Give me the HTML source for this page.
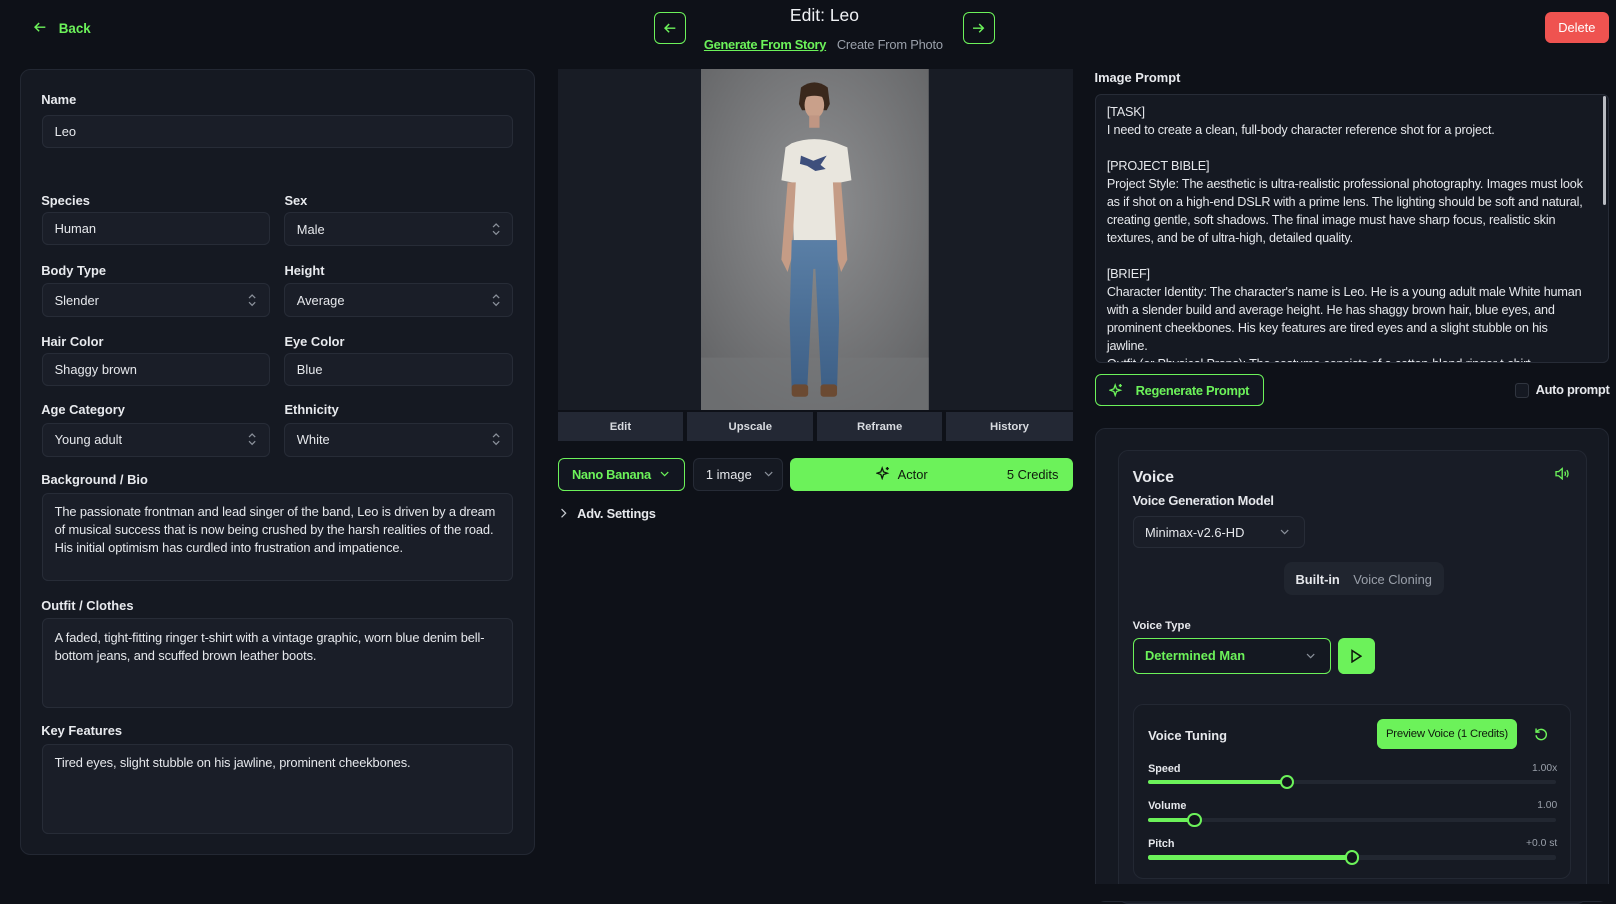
<!DOCTYPE html>
<html><head><meta charset="utf-8"><style>
html,body{margin:0;padding:0;background:#0e1118;}
body{width:1568px;height:874px;zoom:1.03061;overflow:hidden;position:relative;font-family:"Liberation Sans",sans-serif;color:#e6e8ec;}
.a{position:absolute;}
.lbl{position:absolute;font-size:12.5px;font-weight:bold;color:#e8eaee;}
.in{position:absolute;background:#1a1e28;border:1px solid #272c37;border-radius:6px;box-sizing:border-box;font-size:12.5px;color:#e6e8ec;padding:0 11px;display:flex;align-items:center;}
.ta{align-items:flex-start;padding:9px 11px;line-height:17.5px;letter-spacing:-0.12px;}
.chev{position:absolute;right:12px;top:50%;margin-top:-6px;width:8px;height:12px;}
.panel{position:absolute;background:#151922;border:1px solid #232833;border-radius:10px;box-sizing:border-box;}
.btn{position:absolute;box-sizing:border-box;border-radius:6px;display:flex;align-items:center;justify-content:center;font-size:12.5px;}
.grn{color:#6cf25a;}
.tb{position:absolute;top:400px;height:28px;background:#232834;font-size:11px;font-weight:bold;color:#d8dbe0;display:flex;align-items:center;justify-content:center;}
.track{position:absolute;left:1114px;width:396px;height:4px;background:#222731;border-radius:2px;}
.fill{position:absolute;left:0;top:0;height:4px;background:#6cf25a;border-radius:2px;}
.knob{position:absolute;top:-5px;width:10px;height:10px;border-radius:50%;background:#10141b;border:2px solid #6cf25a;margin-left:-7px;}
</style></head><body>

<!-- header -->
<div class="a grn" style="left:33px;top:20px;font-size:13px;font-weight:bold;">
<svg width="12" height="12" viewBox="0 0 12 12" style="vertical-align:-1px;margin-right:12px" fill="none" stroke="#6cf25a" stroke-width="1.4"><path d="M11 6H1M5 2L1 6l4 4"/></svg>Back</div>
<div class="btn" style="left:635px;top:12px;width:31px;height:31px;border:1.5px solid #6cf25a;"><svg width="12" height="12" viewBox="0 0 12 12" fill="none" stroke="#6cf25a" stroke-width="1.4"><path d="M11 6H1M5 2L1 6l4 4"/></svg></div>
<div class="btn" style="left:934px;top:12px;width:31px;height:31px;border:1.5px solid #6cf25a;"><svg width="12" height="12" viewBox="0 0 12 12" fill="none" stroke="#6cf25a" stroke-width="1.4"><path d="M1 6h10M7 2l4 4-4 4"/></svg></div>
<div class="a" style="left:700px;width:200px;top:5px;text-align:center;font-size:17px;color:#f0f2f5;">Edit: Leo</div>
<div class="a grn" style="left:683px;top:36px;font-size:12.5px;font-weight:bold;text-decoration:underline;letter-spacing:-0.3px;">Generate From Story</div>
<div class="a" style="left:812px;top:36px;font-size:12.5px;color:#9aa0aa;letter-spacing:-0.2px;">Create From Photo</div>
<div class="btn" style="left:1499px;top:12px;width:62px;height:30px;background:#ef5350;color:#fff;font-size:12.5px;">Delete</div>

<!-- left panel -->
<div class="panel" style="left:19px;top:67px;width:500px;height:763px;"></div>
<div class="lbl" style="left:40px;top:89px;">Name</div>
<div class="in" style="left:41px;top:112px;width:457px;height:32px;">Leo</div>
<div class="lbl" style="left:40px;top:187px;">Species</div>
<div class="in" style="left:41px;top:206px;width:221px;height:32px;">Human</div>
<div class="lbl" style="left:276px;top:187px;">Sex</div>
<div class="in" style="left:276px;top:206px;width:222px;height:33px;">Male<svg class="chev" viewBox="0 0 8 12" fill="none" stroke="#8a909a" stroke-width="1.2"><path d="M1 4l3-3 3 3M1 8l3 3 3-3"/></svg></div>
<div class="lbl" style="left:40px;top:255px;">Body Type</div>
<div class="in" style="left:41px;top:275px;width:221px;height:33px;">Slender<svg class="chev" viewBox="0 0 8 12" fill="none" stroke="#8a909a" stroke-width="1.2"><path d="M1 4l3-3 3 3M1 8l3 3 3-3"/></svg></div>
<div class="lbl" style="left:276px;top:255px;">Height</div>
<div class="in" style="left:276px;top:275px;width:222px;height:33px;">Average<svg class="chev" viewBox="0 0 8 12" fill="none" stroke="#8a909a" stroke-width="1.2"><path d="M1 4l3-3 3 3M1 8l3 3 3-3"/></svg></div>
<div class="lbl" style="left:40px;top:324px;">Hair Color</div>
<div class="in" style="left:41px;top:343px;width:221px;height:32px;">Shaggy brown</div>
<div class="lbl" style="left:276px;top:324px;">Eye Color</div>
<div class="in" style="left:276px;top:343px;width:222px;height:32px;">Blue</div>
<div class="lbl" style="left:40px;top:390px;">Age Category</div>
<div class="in" style="left:41px;top:410px;width:221px;height:33px;">Young adult<svg class="chev" viewBox="0 0 8 12" fill="none" stroke="#8a909a" stroke-width="1.2"><path d="M1 4l3-3 3 3M1 8l3 3 3-3"/></svg></div>
<div class="lbl" style="left:276px;top:390px;">Ethnicity</div>
<div class="in" style="left:276px;top:410px;width:222px;height:33px;">White<svg class="chev" viewBox="0 0 8 12" fill="none" stroke="#8a909a" stroke-width="1.2"><path d="M1 4l3-3 3 3M1 8l3 3 3-3"/></svg></div>
<div class="lbl" style="left:40px;top:458px;">Background / Bio</div>
<div class="in ta" style="left:41px;top:478px;width:457px;height:86px;">The passionate frontman and lead singer of the band, Leo is driven by a dream of musical success that is now being crushed by the harsh realities of the road. His initial optimism has curdled into frustration and impatience.</div>
<div class="lbl" style="left:40px;top:580px;">Outfit / Clothes</div>
<div class="in ta" style="left:41px;top:600px;width:457px;height:87px;">A faded, tight-fitting ringer t-shirt with a vintage graphic, worn blue denim bell-bottom jeans, and scuffed brown leather boots.</div>
<div class="lbl" style="left:40px;top:702px;">Key Features</div>
<div class="in ta" style="left:41px;top:722px;width:457px;height:87px;">Tired eyes, slight stubble on his jawline, prominent cheekbones.</div>

<!-- middle -->
<div class="a" style="left:541px;top:67px;width:500px;height:331px;background:#181c25;"></div>
<svg class="a" style="left:680px;top:67px;" width="221" height="331" viewBox="0 0 221 331">
<defs><radialGradient id="bg" cx="50%" cy="40%" r="70%"><stop offset="0" stop-color="#8f9092"/><stop offset="1" stop-color="#636466"/></radialGradient>
<linearGradient id="jn" x1="0" x2="0" y1="0" y2="1"><stop offset="0" stop-color="#5a7fa6"/><stop offset="1" stop-color="#3d5f86"/></linearGradient></defs>
<rect width="221" height="331" fill="url(#bg)"/>
<rect y="280" width="221" height="51" fill="#76777a" opacity=".5"/>
<path d="M97 18q13-10 26 0l2 16-3 6h-24l-3-6z" fill="#3a281c"/>
<ellipse cx="110" cy="35" rx="9.5" ry="13" fill="#c9a08a"/>
<path d="M99 22q11-6 22 0l-1 6q-10-4-20 0z" fill="#3a281c"/>
<rect x="105" y="45" width="10" height="12" fill="#c09683"/>
<path d="M88 72q22-8 44 0l10 4 4 32-10 2-2 56h-44l-2-56-10-2 4-32z" fill="#e9e6de"/>
<path d="M97 84l12 5 13-5-6 9 5 4-10 2-8-5-7-2z" fill="#3e4f7c"/>
<path d="M84 110l-6 75 6 12 4-14 4-73zM136 110l6 75-6 12-4-14-4-73z" fill="#c59c86"/>
<path d="M88 166h44l2 78-2 68h-15l-6-118h-2l-6 118h-15l-2-68z" fill="url(#jn)"/>
<rect x="88" y="306" width="16" height="12" rx="3" fill="#6b4a32"/>
<rect x="116" y="306" width="16" height="12" rx="3" fill="#6b4a32"/>
</svg>
<div class="tb" style="left:541px;width:122px;">Edit</div>
<div class="tb" style="left:667px;width:122px;">Upscale</div>
<div class="tb" style="left:793px;width:121px;">Reframe</div>
<div class="tb" style="left:918px;width:123px;">History</div>

<div class="btn grn" style="left:541px;top:444px;width:124px;height:32px;border:1.5px solid #6cf25a;background:#121620;justify-content:flex-start;padding-left:13px;font-weight:bold;letter-spacing:-0.3px;">Nano Banana<svg width="9" height="6" viewBox="0 0 9 6" style="margin-left:9px" fill="none" stroke="#6cf25a" stroke-width="1.2"><path d="M1 1l3.5 3.5L8 1"/></svg></div>
<div class="btn" style="left:672px;top:444px;width:88px;height:32px;border:1px solid #262b36;background:#151922;justify-content:flex-start;padding-left:12px;">1 image<svg width="9" height="6" viewBox="0 0 9 6" style="margin-left:12px" fill="none" stroke="#8a909a" stroke-width="1.2"><path d="M1 1l3.5 3.5L8 1"/></svg></div>
<div class="btn" style="left:767px;top:444px;width:274px;height:32px;background:#6cf25a;color:#0f1a0d;">
<svg class="a" style="left:83px;top:8px" width="14" height="14" viewBox="0 0 14 14" fill="none" stroke="#0f1a0d" stroke-width="1.3"><path d="M6 2l1.3 3.7L11 7l-3.7 1.3L6 12 4.7 8.3 1 7l3.7-1.3z"/><path d="M11 1v3M9.5 2.5h3"/></svg>
<span class="a" style="left:104px;top:9px;">Actor</span><span class="a" style="right:14px;top:9px;">5 Credits</span></div>
<div class="a" style="left:543px;top:491px;font-size:12.5px;font-weight:bold;letter-spacing:-0.2px;"><svg width="7" height="10" viewBox="0 0 7 10" fill="none" stroke="#c8ccd2" stroke-width="1.2" style="margin-right:10px"><path d="M1.5 1l4 4-4 4"/></svg>Adv. Settings</div>

<!-- right -->
<div class="lbl" style="left:1062px;top:68px;">Image Prompt</div>
<div class="in ta" style="left:1062px;top:91px;width:499px;height:261px;overflow:hidden;padding:8px 18px 0 11px;background:#151922;font-size:12.3px;line-height:17.5px;letter-spacing:-0.18px;display:block;">[TASK]<br>I need to create a clean, full-body character reference shot for a project.<br><br>[PROJECT BIBLE]<br>Project Style: The aesthetic is ultra-realistic professional photography. Images must look as if shot on a high-end DSLR with a prime lens. The lighting should be soft and natural, creating gentle, soft shadows. The final image must have sharp focus, realistic skin textures, and be of ultra-high, detailed quality.<br><br>[BRIEF]<br>Character Identity: The character's name is Leo. He is a young adult male White human with a slender build and average height. He has shaggy brown hair, blue eyes, and prominent cheekbones. His key features are tired eyes and a slight stubble on his jawline.<br>Outfit (or Physical Props): The costume consists of a cotton-blend ringer t-shirt</div>
<div class="a" style="left:1555px;top:93px;width:3px;height:106px;background:#b9bcc2;border-radius:2px;"></div>
<div class="btn grn" style="left:1062px;top:363px;width:164px;height:31px;border:1.5px solid #6cf25a;font-weight:bold;background:#121620;letter-spacing:-0.3px;">
<svg width="14" height="14" viewBox="0 0 14 14" fill="none" stroke="#6cf25a" stroke-width="1.3" style="margin-right:12px"><path d="M6 2l1.3 3.7L11 7l-3.7 1.3L6 12 4.7 8.3 1 7l3.7-1.3z"/><path d="M11 1v3M9.5 2.5h3"/></svg>Regenerate Prompt</div>
<div class="a" style="left:1470px;top:372px;width:12px;height:12px;border:1px solid #30353f;border-radius:3px;background:#151922;"></div>
<div class="a" style="left:1490px;top:371px;font-size:12.5px;font-weight:bold;letter-spacing:-0.3px;">Auto prompt</div>

<div class="panel" style="left:1062px;top:415px;width:499px;height:460px;"></div>
<div class="panel" style="left:1085px;top:437px;width:455px;height:440px;background:#181c26;"></div>
<div class="a" style="left:1099px;top:455px;font-size:15.5px;font-weight:bold;">Voice</div>
<svg class="a" style="left:1509px;top:453px" width="15" height="13" viewBox="0 0 15 13" fill="none" stroke="#6cf25a" stroke-width="1.3"><path d="M1 4.5h2.5L7 1.5v10L3.5 8.5H1z"/><path d="M9.5 4.5q1.3 2 0 4M11.5 3q2.4 3.5 0 7"/></svg>
<div class="a" style="left:1099px;top:478px;font-size:12.5px;font-weight:bold;letter-spacing:-0.2px;">Voice Generation Model</div>
<div class="in" style="left:1099px;top:501px;width:167px;height:31px;background:#1a1e28;">Minimax-v2.6-HD<svg width="9" height="6" viewBox="0 0 9 6" style="position:absolute;right:14px" fill="none" stroke="#8a909a" stroke-width="1.2"><path d="M1 1l3.5 3.5L8 1"/></svg></div>
<div class="a" style="left:1246px;top:545px;width:155px;height:32px;background:#20252f;border-radius:8px;"></div>
<div class="a" style="left:1257px;top:555px;font-size:12.5px;font-weight:bold;">Built-in</div>
<div class="a" style="left:1313px;top:555px;font-size:12.5px;color:#9aa0aa;">Voice Cloning</div>
<div class="a" style="left:1099px;top:602px;font-size:11px;font-weight:bold;">Voice Type</div>
<div class="btn grn" style="left:1099px;top:619px;width:192px;height:35px;border:1.5px solid #6cf25a;justify-content:flex-start;padding-left:11px;font-weight:bold;background:#141821;">Determined Man<svg width="9" height="6" viewBox="0 0 9 6" style="position:absolute;right:14px" fill="none" stroke="#8a909a" stroke-width="1.2"><path d="M1 1l3.5 3.5L8 1"/></svg></div>
<div class="btn" style="left:1298px;top:619px;width:36px;height:35px;background:#6cf25a;"><svg width="12" height="14" viewBox="0 0 12 14" fill="none" stroke="#0f1a0d" stroke-width="1.5"><path d="M2 1.5l8.5 5.5L2 12.5z"/></svg></div>
<div class="panel" style="left:1099px;top:683px;width:425px;height:170px;background:#161a23;"></div>
<div class="a" style="left:1114px;top:706px;font-size:12.5px;font-weight:bold;">Voice Tuning</div>
<div class="btn" style="left:1336px;top:698px;width:136px;height:29px;background:#6cf25a;color:#0f1a0d;font-size:11px;letter-spacing:-0.2px;">Preview Voice (1 Credits)</div>
<svg class="a" style="left:1488px;top:705px" width="14" height="14" viewBox="0 0 14 14" fill="none" stroke="#6cf25a" stroke-width="1.4"><path d="M2.5 5A5 5 0 1 1 2 8"/><path d="M2 1.5V5h3.5"/></svg>
<div class="a" style="left:1114px;top:740px;font-size:10.5px;font-weight:bold;">Speed</div><div class="a" style="right:57px;top:740px;font-size:10px;color:#9aa0aa;">1.00x</div>
<div class="track" style="top:757px;"><div class="fill" style="width:135px"></div><div class="knob" style="left:135px"></div></div>
<div class="a" style="left:1114px;top:776px;font-size:10.5px;font-weight:bold;">Volume</div><div class="a" style="right:57px;top:776px;font-size:10px;color:#9aa0aa;">1.00</div>
<div class="track" style="top:794px;"><div class="fill" style="width:45px"></div><div class="knob" style="left:45px"></div></div>
<div class="a" style="left:1114px;top:813px;font-size:10.5px;font-weight:bold;">Pitch</div><div class="a" style="right:57px;top:813px;font-size:10px;color:#9aa0aa;">+0.0 st</div>
<div class="track" style="top:830px;"><div class="fill" style="width:198px"></div><div class="knob" style="left:198px"></div></div>
<div class="a" style="left:1040px;top:858px;width:528px;height:16px;background:#0e1118;"></div>
</body></html>
